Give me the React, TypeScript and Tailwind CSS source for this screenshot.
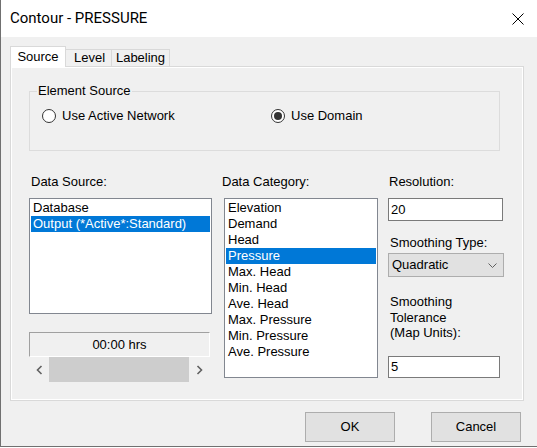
import React from "react";

const dataSources = ["Database", "Output (*Active*:Standard)"];
const categories = [
  "Elevation",
  "Demand",
  "Head",
  "Pressure",
  "Max. Head",
  "Min. Head",
  "Ave. Head",
  "Max. Pressure",
  "Min. Pressure",
  "Ave. Pressure",
];

function Radio({ checked, label }: { checked?: boolean; label: string }) {
  return (
    <div className="flex h-[16px] items-center gap-[6px]">
      <span className="flex h-[14px] w-[14px] items-center justify-center rounded-full border border-[#333333] bg-white">
        {checked ? <span className="h-[8px] w-[8px] rounded-full bg-[#333333]" /> : null}
      </span>
      <span className="leading-[16px]">{label}</span>
    </div>
  );
}

function ListBox({
  items,
  selected,
  className,
}: {
  items: string[];
  selected: string;
  className: string;
}) {
  return (
    <div className={`border border-[#828790] bg-white p-[1px] ${className}`}>
      {items.map((item) => (
        <div
          key={item}
          className={
            item === selected
              ? "h-[16px] whitespace-nowrap bg-[#0078d7] pl-[2px] leading-[16px] text-white"
              : "h-[16px] whitespace-nowrap pl-[2px] leading-[16px]"
          }
        >
          {item}
        </div>
      ))}
    </div>
  );
}

function Chevron({ dir }: { dir: "left" | "right" }) {
  return (
    <svg width="7" height="10" viewBox="0 0 7 10">
      <polyline
        points={dir === "left" ? "5.5,1 1.5,5 5.5,9" : "1.5,1 5.5,5 1.5,9"}
        fill="none"
        stroke="#606060"
        strokeWidth="1.6"
      />
    </svg>
  );
}

export default function App() {
  return (
    <div className="h-[448px] w-[537px] overflow-hidden bg-white font-['Liberation_Sans',Arial,sans-serif] text-[13px] text-black">
      <div className="flex h-[447px] flex-col border-b border-l border-[#707070] bg-[#f0f0f0]">
        {/* title bar */}
        <div className="flex h-[37px] shrink-0 items-center justify-between bg-white pl-[9px] pr-[13px]">
          <span className="font-['Roboto',sans-serif] text-[15px] text-black">Contour - PRESSURE</span>
          <svg width="12" height="12" viewBox="0 0 12 12">
            <path d="M0.5 0.5 L11.5 11.5 M11.5 0.5 L0.5 11.5" stroke="#000" strokeWidth="1" />
          </svg>
        </div>

        <div className="pl-[9px] pt-[9px]">
          {/* tabs */}
          <div className="flex h-[20px] items-end">
            <div className="relative z-10 -mb-[1px] flex h-[21px] w-[56px] items-center justify-center border border-b-0 border-[#d9d9d9] bg-white">
              Source
            </div>
            <div className="flex h-[17px] w-[46px] items-center justify-center border-r border-t border-[#d9d9d9] pl-[2px]">
              Level
            </div>
            <div className="flex h-[17px] w-[58px] items-center justify-center border-r border-t border-[#d9d9d9]">
              Labeling
            </div>
          </div>

          {/* tab page */}
          <div className="h-[335px] w-[514px] border border-[#d9d9d9] bg-[#f0f0f0] pl-[18px] pt-[24px] shadow-[inset_1px_1px_0_#fff,inset_-1px_-1px_0_#fff]">
            <div className="relative h-[60px] w-[471px] border border-[#dcdcdc] pl-[12px] pt-[16px]">
              <span className="absolute -top-[9px] left-[7px] bg-[#f0f0f0] px-[1px] leading-[16px]">
                Element Source
              </span>
              <div className="flex">
                <div className="w-[229px]">
                  <Radio label="Use Active Network" />
                </div>
                <Radio checked label="Use Domain" />
              </div>
            </div>

            <div className="mt-[23px] flex">
              {/* data source */}
              <div className="w-[183px]">
                <div className="h-[16px] pl-[2px] leading-[16px]">Data Source:</div>
                <ListBox
                  items={dataSources}
                  selected="Output (*Active*:Standard)"
                  className="mt-[8px] h-[116px] w-[183px]"
                />
                <div className="mt-[18px] flex h-[25px] w-[181px] items-center justify-center border-b border-l border-r border-t border-b-white border-l-[#a0a0a0] border-r-white border-t-[#a0a0a0]">
                  00:00 hrs
                </div>
                <div className="flex h-[25px] w-[181px]">
                  <div className="flex w-[20px] items-center justify-center">
                    <Chevron dir="left" />
                  </div>
                  <div className="flex-1 bg-[#cdcdcd]" />
                  <div className="flex w-[21px] items-center justify-center">
                    <Chevron dir="right" />
                  </div>
                </div>
              </div>

              {/* data category */}
              <div className="ml-[12px] w-[154px]">
                <div className="-ml-[2px] h-[16px] leading-[16px]">Data Category:</div>
                <ListBox
                  items={categories}
                  selected="Pressure"
                  className="mt-[8px] h-[180px] w-[154px]"
                />
              </div>

              {/* options */}
              <div className="ml-[10px] w-[116px]">
                <div className="h-[16px] pl-[1px] leading-[16px]">Resolution:</div>
                <div className="mt-[8px] flex h-[23px] w-[115px] items-center border border-[#7a7a7a] bg-white pl-[2px]">
                  20
                </div>
                <div className="mt-[14px] h-[16px] pl-[2px] leading-[16px]">Smoothing Type:</div>
                <div className="mt-[2px] flex h-[24px] w-[116px] items-center justify-between border border-[#adadad] bg-[#e1e1e1] pl-[3px] pr-[6px]">
                  <span>Quadratic</span>
                  <svg width="9" height="5" viewBox="0 0 9 5">
                    <polyline points="0.5,0.5 4.5,4.5 8.5,0.5" fill="none" stroke="#606060" strokeWidth="1" />
                  </svg>
                </div>
                <div className="mt-[17px] h-[62px] pl-[2px] leading-[15.5px]">
                  Smoothing
                  <br />
                  Tolerance
                  <br />
                  (Map Units):
                </div>
                <div className="flex h-[22px] w-[112px] items-center border border-[#7a7a7a] bg-white pl-[2px]">
                  5
                </div>
              </div>
            </div>
          </div>
        </div>

        {/* buttons */}
        <div className="mt-[11px] flex justify-end gap-[36px] pr-[16px]">
          <button className="h-[30px] w-[90px] border border-[#adadad] bg-[#e1e1e1]">OK</button>
          <button className="h-[30px] w-[90px] border border-[#adadad] bg-[#e1e1e1]">Cancel</button>
        </div>
      </div>
    </div>
  );
}
